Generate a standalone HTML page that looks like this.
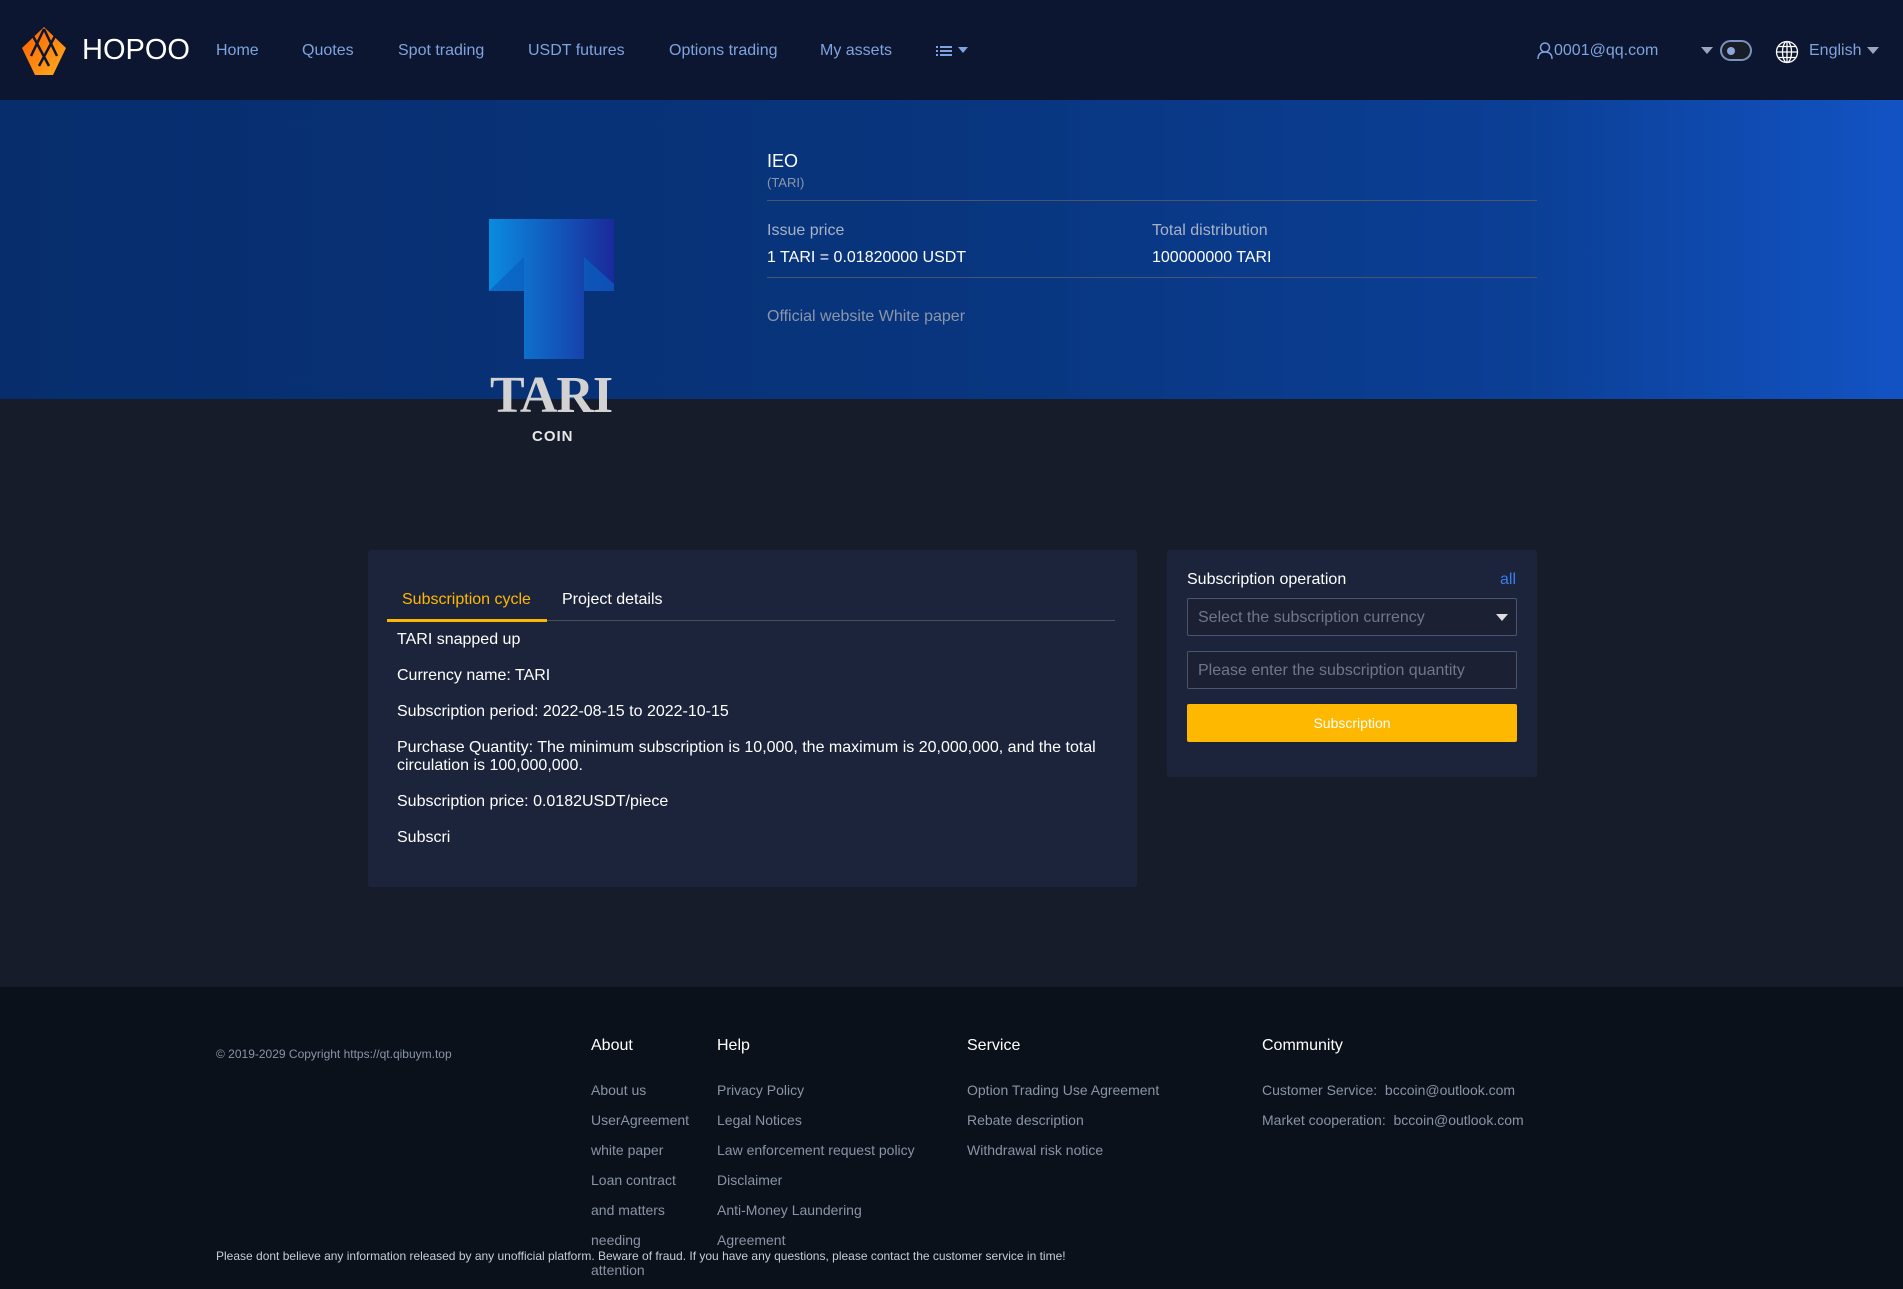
<!DOCTYPE html>
<html><head><meta charset="utf-8">
<style>
*{margin:0;padding:0;box-sizing:border-box}
body{width:1903px;height:1289px;overflow:hidden;background:#171c2a;font-family:"Liberation Sans",Arial,sans-serif;position:relative}
.abs{position:absolute;white-space:nowrap}
header{position:absolute;left:0;top:0;width:1903px;height:100px;background:#0c1631}
.nav{color:#7ea3de;font-size:16px;top:42px}
.banner{position:absolute;left:0;top:100px;width:1903px;height:299px;background:linear-gradient(90deg,#072d6c 0%,#08357e 50%,#0b3f95 80%,#1253c4 100%)}
.card{position:absolute;background:#1b243b;border-radius:3px}
.ct{color:#fff;font-size:16px;left:29px}
footer{position:absolute;left:0;top:987px;width:1903px;height:302px;background:#0a111a}
.fh{color:#fff;font-size:16px;top:1037px}
.fl{color:#8a94a6;font-size:14px;line-height:30px;white-space:normal}
</style></head><body>
<header>
<svg class="abs" style="left:19px;top:26px" width="50" height="50" viewBox="0 0 50 50">
<defs><linearGradient id="g" x1="0" y1="0" x2="1" y2="1"><stop offset="0" stop-color="#ff5a00"/><stop offset="1" stop-color="#ffb020"/></linearGradient></defs>
<path d="M25 1 L47 22 L34 49 L16 49 L3 22 Z" fill="url(#g)"/>
<path d="M14 10 L30 40 M25 3 L38 30 M36 10 L20 40 M25 3 L12 30" stroke="#0c1631" stroke-width="2.5" fill="none"/>
</svg>
<div class="abs" style="left:82px;top:34px;color:#fff;font-size:29px">HOPOO</div>
<div class="abs nav" style="left:216px">Home</div>
<div class="abs nav" style="left:302px">Quotes</div>
<div class="abs nav" style="left:398px">Spot trading</div>
<div class="abs nav" style="left:528px">USDT futures</div>
<div class="abs nav" style="left:669px">Options trading</div>
<div class="abs nav" style="left:820px">My assets</div>
<svg class="abs" style="left:936px;top:45px" width="35" height="12"><g fill="#7ea3de"><rect x="0" y="1" width="2" height="2"/><rect x="4" y="1" width="12" height="2"/><rect x="0" y="5" width="2" height="2"/><rect x="4" y="5" width="12" height="2"/><rect x="0" y="9" width="2" height="2"/><rect x="4" y="9" width="12" height="2"/><path d="M22 2 L32 2 L27 8 Z"/></g></svg>
<svg class="abs" style="left:1537px;top:42px" width="16" height="18" viewBox="0 0 16 18"><circle cx="8" cy="5.5" r="4.5" stroke="#7ea3de" stroke-width="1.5" fill="none"/><path d="M1 17 Q1 10 8 10 Q15 10 15 17" stroke="#7ea3de" stroke-width="1.5" fill="none"/></svg>
<div class="abs nav" style="left:1554px">0001@qq.com</div>
<svg class="abs" style="left:1701px;top:47px" width="12" height="8"><path d="M0 0 L12 0 L6 7Z" fill="#9aa6bd"/></svg>
<div class="abs" style="left:1720px;top:40px;width:32px;height:21px;border:2px solid #7a92bd;border-radius:11px;background:#181d28"><div style="position:absolute;left:5px;top:5px;width:8px;height:8px;border-radius:50%;background:#8aa8dd"></div></div>
<svg class="abs" style="left:1775px;top:40px" width="24" height="24" viewBox="0 0 24 24" fill="none" stroke="#fff" stroke-width="1.3"><circle cx="12" cy="12" r="10.5"/><ellipse cx="12" cy="12" rx="4.5" ry="10.5"/><path d="M12 1.5V22.5M1.5 12H22.5M3 6.5H21M3 17.5H21"/></svg>
<div class="abs nav" style="left:1809px">English</div>
<svg class="abs" style="left:1867px;top:47px" width="12" height="8"><path d="M0 0 L12 0 L6 7Z" fill="#9aa6bd"/></svg>
</header>
<div class="banner"></div>
<svg class="abs" style="left:489px;top:219px" width="125" height="140" viewBox="0 0 125 140">
<defs><linearGradient id="t" x1="0" x2="1"><stop offset="0" stop-color="#0a8be0"/><stop offset="1" stop-color="#1a2a9a"/></linearGradient></defs>
<path d="M0 0H125V72H95V140H35V72H0Z" fill="url(#t)"/>
<path d="M0 72L35 38V72Z M95 38L125 65V72H95Z" fill="#0a5fc0" opacity=".7"/>
</svg>
<div class="abs" style="left:490px;top:366px;font-family:'Liberation Serif',serif;font-weight:bold;font-size:52px;color:#d2d2d2;letter-spacing:-1px">TARI</div>
<div class="abs" style="left:532px;top:428px;font-size:15px;font-weight:bold;color:#e8e8e8;letter-spacing:1px">COIN</div>
<div class="abs" style="left:767px;top:151px;color:#fff;font-size:18px">IEO</div>
<div class="abs" style="left:767px;top:175px;color:#8b96ab;font-size:13px">(TARI)</div>
<div class="abs" style="left:767px;top:200px;width:770px;height:1px;background:#4a5670"></div>
<div class="abs" style="left:767px;top:222px;color:#a8b2c6;font-size:16px">Issue price</div>
<div class="abs" style="left:767px;top:249px;color:#fff;font-size:16px">1 TARI = 0.01820000 USDT</div>
<div class="abs" style="left:1152px;top:222px;color:#a8b2c6;font-size:16px">Total distribution</div>
<div class="abs" style="left:1152px;top:249px;color:#fff;font-size:16px">100000000 TARI</div>
<div class="abs" style="left:767px;top:277px;width:770px;height:1px;background:#4a5670"></div>
<div class="abs" style="left:767px;top:308px;color:#8b96ab;font-size:16px">Official website White paper</div>

<div class="card" style="left:368px;top:550px;width:769px;height:337px">
<div class="abs" style="left:34px;top:41px;color:#ffb800;font-size:16px">Subscription cycle</div>
<div class="abs" style="left:194px;top:41px;color:#fff;font-size:16px">Project details</div>
<div class="abs" style="left:19px;top:70px;width:728px;height:1px;background:#4a4f5c"></div>
<div class="abs" style="left:19px;top:69px;width:160px;height:3px;background:#ffb800"></div>
<div class="abs ct" style="top:81px">TARI snapped up</div>
<div class="abs ct" style="top:117px">Currency name: TARI</div>
<div class="abs ct" style="top:153px">Subscription period: 2022-08-15 to 2022-10-15</div>
<div class="abs ct" style="top:189px;line-height:18px;white-space:normal;width:720px">Purchase Quantity: The minimum subscription is 10,000, the maximum is 20,000,000, and the total circulation is 100,000,000.</div>
<div class="abs ct" style="top:243px">Subscription price: 0.0182USDT/piece</div>
<div class="abs ct" style="top:279px">Subscri</div>
</div>

<div class="card" style="left:1167px;top:550px;width:370px;height:227px">
<div class="abs" style="left:20px;top:21px;color:#fff;font-size:16px">Subscription operation</div>
<div class="abs" style="left:333px;top:21px;color:#3a7cf0;font-size:16px">all</div>
<div class="abs" style="left:20px;top:48px;width:330px;height:38px;border:1px solid #4a5670;border-radius:2px;background:#1b2133"><span class="abs" style="left:10px;top:10px;color:#6f7789;font-size:16px">Select the subscription currency</span><svg class="abs" style="left:308px;top:15px" width="12" height="7"><path d="M0 0H12L6 7Z" fill="#ddd"/></svg></div>
<div class="abs" style="left:20px;top:101px;width:330px;height:38px;border:1px solid #4a5670;border-radius:2px;background:#1b2133"><span class="abs" style="left:10px;top:10px;color:#6f7789;font-size:16px">Please enter the subscription quantity</span></div>
<div class="abs" style="left:20px;top:154px;width:330px;height:38px;background:#ffb800;border-radius:2px;color:#fff;font-size:14px;text-align:center;line-height:38px">Subscription</div>
</div>

<footer></footer>
<div class="abs" style="left:216px;top:1047px;color:#8a94a6;font-size:12px">© 2019-2029 Copyright https://qt.qibuym.top</div>
<div class="abs fh" style="left:591px">About</div>
<div class="abs fh" style="left:717px">Help</div>
<div class="abs fh" style="left:967px">Service</div>
<div class="abs fh" style="left:1262px">Community</div>
<div class="abs fl" style="left:591px;top:1075px;width:105px">About us<br>UserAgreement<br>white paper<br>Loan contract and matters needing attention</div>
<div class="abs fl" style="left:717px;top:1075px;width:210px">Privacy Policy<br>Legal Notices<br>Law enforcement request policy<br>Disclaimer<br>Anti-Money Laundering Agreement</div>
<div class="abs fl" style="left:967px;top:1075px;width:260px">Option Trading Use Agreement<br>Rebate description<br>Withdrawal risk notice</div>
<div class="abs fl" style="left:1262px;top:1075px;width:320px">Customer Service:&nbsp; bccoin@outlook.com<br>Market cooperation:&nbsp; bccoin@outlook.com</div>
<div class="abs" style="left:216px;top:1249px;color:#c8ccd4;font-size:12px">Please dont believe any information released by any unofficial platform. Beware of fraud. If you have any questions, please contact the customer service in time!</div>
</body></html>
